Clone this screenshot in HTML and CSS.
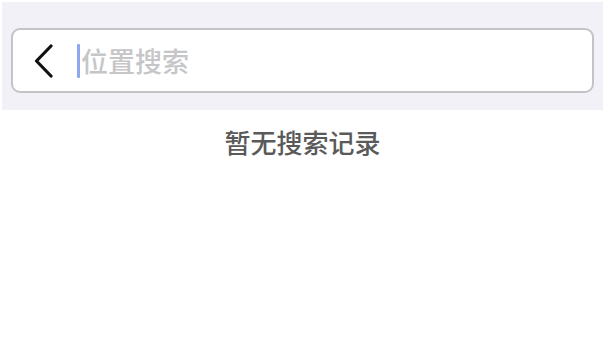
FILE: index.html
```html
<!DOCTYPE html>
<html lang="zh">
<head>
<meta charset="utf-8">
<link rel="stylesheet" href="styles.css">
</head>
<body>
<div class="page">
  <div class="header">
    <div class="search">
      <svg class="back" width="21" height="34" viewBox="0 0 21 34">
        <path d="M18 2 L3.5 17 L18 32" fill="none" stroke="#111" stroke-width="3.2" stroke-linecap="round" stroke-linejoin="round"/>
      </svg>
      <span class="caret"></span>
      <span class="placeholder">位置搜索</span>
    </div>
  </div>
  <div class="empty">暂无搜索记录</div>
</div>
</body>
</html>
```
FILE: styles.css
```css
html, body {
  margin: 0;
  padding: 0;
  background: #fff;
}
.page {
  width: 605px;
  height: 357px;
  padding: 2px 2px 0 2px;
  box-sizing: border-box;
  font-family: "Noto Sans CJK SC", "Noto Sans", sans-serif;
}
.header {
  background: #f2f1f7;
  padding: 26px 9px 17px 9px;
}
.search {
  height: 65px;
  box-sizing: border-box;
  border: 2px solid #c4c4c6;
  border-radius: 9px;
  background: #fff;
  display: flex;
  align-items: center;
  padding-left: 20px;
}
.back {
  flex: none;
}
.caret {
  width: 3px;
  height: 34px;
  background: #8ea7ee;
  margin-left: 23px;
  border-radius: 1px;
}
.placeholder {
  font-size: 27px;
  font-weight: 500;
  color: #c6c6c8;
  line-height: 1;
  margin-left: 1px;
}
.empty {
  text-align: center;
  font-size: 26px;
  font-weight: 500;
  color: #5a5a5a;
  margin-top: 16px;
  line-height: 1.2;
}
```
